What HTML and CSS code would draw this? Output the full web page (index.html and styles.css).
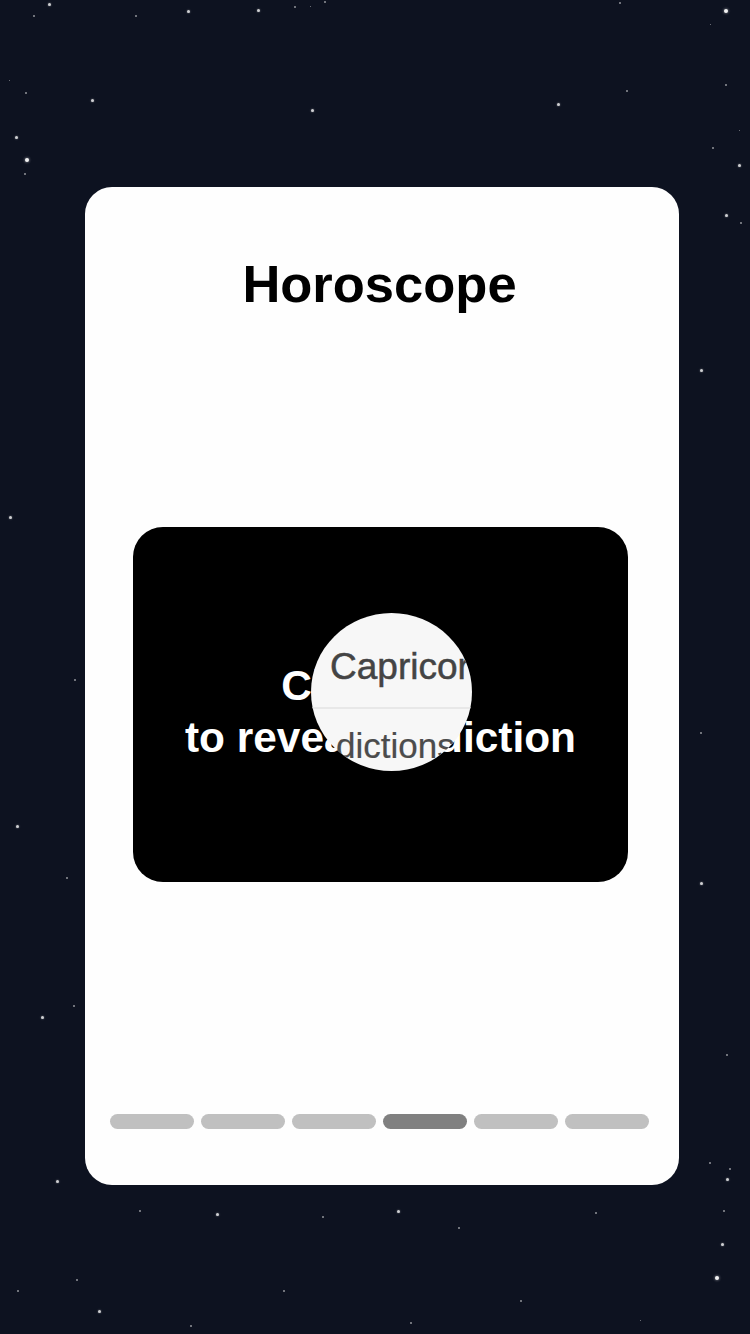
FILE: index.html
```html
<!DOCTYPE html>
<html lang="en">
<head>
<meta charset="utf-8">
<title>Horoscope</title>
<link rel="stylesheet" href="styles.css">
</head>
<body>
<div class="sky">
  <span class="star s2" style="left:48px;top:3px"></span>
  <span class="star s1" style="left:33px;top:15px"></span>
  <span class="star s1" style="left:135px;top:15px"></span>
  <span class="star s2" style="left:187px;top:10px"></span>
  <span class="star s2" style="left:257px;top:9px"></span>
  <span class="star s1" style="left:294px;top:6px"></span>
  <span class="star s0" style="left:310px;top:6px"></span>
  <span class="star s1" style="left:324px;top:1px"></span>
  <span class="star s2" style="left:91px;top:99px"></span>
  <span class="star s2" style="left:311px;top:109px"></span>
  <span class="star s2" style="left:15px;top:136px"></span>
  <span class="star s3" style="left:25px;top:158px"></span>
  <span class="star s1" style="left:24px;top:173px"></span>
  <span class="star s0" style="left:9px;top:80px"></span>
  <span class="star s1" style="left:25px;top:92px"></span>
  <span class="star s2" style="left:557px;top:103px"></span>
  <span class="star s1" style="left:619px;top:2px"></span>
  <span class="star s3" style="left:724px;top:9px"></span>
  <span class="star s0" style="left:710px;top:24px"></span>
  <span class="star s1" style="left:626px;top:90px"></span>
  <span class="star s1" style="left:725px;top:84px"></span>
  <span class="star s0" style="left:739px;top:130px"></span>
  <span class="star s1" style="left:712px;top:147px"></span>
  <span class="star s2" style="left:738px;top:164px"></span>
  <span class="star s2" style="left:725px;top:214px"></span>
  <span class="star s1" style="left:740px;top:222px"></span>
  <span class="star s2" style="left:700px;top:369px"></span>
  <span class="star s2" style="left:9px;top:516px"></span>
  <span class="star s1" style="left:74px;top:679px"></span>
  <span class="star s2" style="left:16px;top:825px"></span>
  <span class="star s1" style="left:66px;top:877px"></span>
  <span class="star s2" style="left:41px;top:1016px"></span>
  <span class="star s1" style="left:73px;top:1005px"></span>
  <span class="star s1" style="left:700px;top:732px"></span>
  <span class="star s2" style="left:700px;top:882px"></span>
  <span class="star s1" style="left:726px;top:1054px"></span>
  <span class="star s1" style="left:709px;top:1162px"></span>
  <span class="star s1" style="left:729px;top:1168px"></span>
  <span class="star s2" style="left:726px;top:1178px"></span>
  <span class="star s1" style="left:723px;top:1210px"></span>
  <span class="star s2" style="left:721px;top:1243px"></span>
  <span class="star s3" style="left:715px;top:1276px"></span>
  <span class="star s1" style="left:139px;top:1210px"></span>
  <span class="star s2" style="left:216px;top:1213px"></span>
  <span class="star s1" style="left:322px;top:1216px"></span>
  <span class="star s2" style="left:397px;top:1210px"></span>
  <span class="star s1" style="left:458px;top:1227px"></span>
  <span class="star s1" style="left:595px;top:1212px"></span>
  <span class="star s2" style="left:98px;top:1310px"></span>
  <span class="star s1" style="left:17px;top:1290px"></span>
  <span class="star s2" style="left:56px;top:1180px"></span>
  <span class="star s1" style="left:76px;top:1279px"></span>
  <span class="star s1" style="left:283px;top:1290px"></span>
  <span class="star s1" style="left:520px;top:1300px"></span>
  <span class="star s0" style="left:640px;top:1320px"></span>
  <span class="star s1" style="left:190px;top:1325px"></span>
  <span class="star s1" style="left:410px;top:1322px"></span>
</div>

<main class="card">
  <h1 class="title">Horoscope</h1>
  <div class="reveal">
    <p class="reveal-text"><span class="line-one">Click the</span><br>to reveal prediction</p>
    <div class="loupe">
      <div class="loupe-top">Capricorn</div>
      <div class="loupe-rule"></div>
      <div class="loupe-bottom">dictions</div>
    </div>
  </div>
  <div class="progress">
    <span class="seg"></span>
    <span class="seg"></span>
    <span class="seg"></span>
    <span class="seg active"></span>
    <span class="seg"></span>
    <span class="seg"></span>
  </div>
</main>
</body>
</html>
```

FILE: styles.css
```css
html, body {
  margin: 0;
  padding: 0;
}

body {
  width: 750px;
  height: 1334px;
  background: #0d1220;
  font-family: "Liberation Sans", Arial, sans-serif;
  position: relative;
  overflow: hidden;
}

.sky {
  position: absolute;
  inset: 0;
  pointer-events: none;
}

.star {
  position: absolute;
  border-radius: 50%;
  background: #fff;
}

.s0 { width: 1px; height: 1px; opacity: 0.5; }
.s1 { width: 2px; height: 2px; opacity: 0.55; }
.s2 { width: 3px; height: 3px; opacity: 0.8; box-shadow: 0 0 2px rgba(255,255,255,0.6); }
.s3 { width: 4px; height: 4px; opacity: 0.95; box-shadow: 0 0 3px rgba(255,255,255,0.7); }

.card {
  position: relative;
  box-sizing: border-box;
  margin: 187px 0 0 85px;
  width: 594px;
  height: 998px;
  background: #fefefe;
  border-radius: 27px;
  display: flex;
  flex-direction: column;
  padding: 67px 0 56px 0;
}

.title {
  margin: 0;
  font-size: 52.5px;
  line-height: 60px;
  font-weight: 700;
  color: #000;
  text-align: center;
  padding-right: 5px;
}

.reveal {
  position: relative;
  margin: 213px 0 0 48px;
  width: 495px;
  height: 355px;
  background: #000;
  border-radius: 30px;
  display: flex;
  align-items: center;
  justify-content: center;
  box-sizing: border-box;
  padding-top: 14px;
  overflow: hidden;
}

.reveal-text {
  margin: 0;
  color: #fff;
  font-size: 42.4px;
  line-height: 52px;
  font-weight: 700;
  text-align: center;
}

.line-one {
  padding-right: 22px;
}

.loupe {
  position: absolute;
  left: 178px;
  top: 86px;
  width: 161px;
  height: 158px;
  border-radius: 50%;
  background: #f7f7f7;
  overflow: hidden;
  color: #444;
}

.loupe-top {
  position: absolute;
  left: 19px;
  top: 34px;
  font-size: 37px;
  line-height: 40px;
  white-space: nowrap;
  -webkit-text-stroke: 0.5px #444;
}

.loupe-rule {
  position: absolute;
  left: 0;
  right: 0;
  top: 94px;
  height: 2px;
  background: #e8e8e8;
}

.loupe-bottom {
  position: absolute;
  left: 25px;
  top: 113px;
  font-size: 35px;
  line-height: 40px;
  white-space: nowrap;
  color: #4c4c4c;
  -webkit-text-stroke: 0.2px #4c4c4c;
}

.progress {
  margin: auto 0 0 25px;
  display: flex;
  gap: 7px;
}

.seg {
  width: 84px;
  height: 15px;
  border-radius: 8px;
  background: #c0c0c0;
}

.seg.active {
  background: #808080;
}
```
